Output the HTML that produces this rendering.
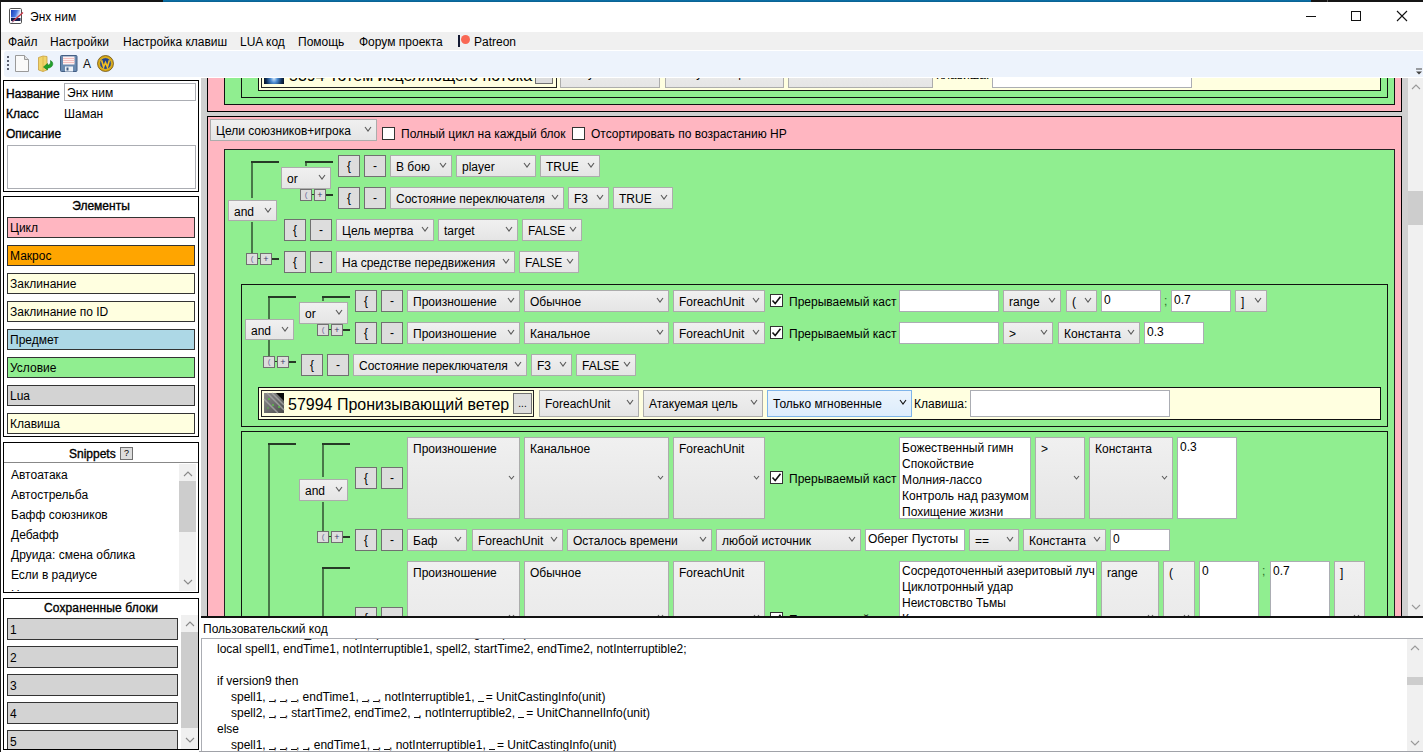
<!DOCTYPE html><html><head><meta charset="utf-8"><style>
html,body{margin:0;padding:0;width:1423px;height:752px;overflow:hidden;background:#fff}
body{position:relative;font-family:"Liberation Sans",sans-serif}
.a{position:absolute;box-sizing:border-box}
.t{position:absolute;white-space:nowrap;font-family:"Liberation Sans",sans-serif;color:#000}
svg.a{overflow:visible}
</style></head><body>
<div class="a" style="left:0px;top:0px;width:1423px;height:752px;background:#fff;"></div>
<div class="a" style="left:0px;top:0px;width:163px;height:2px;background:#151515;"></div>
<div class="a" style="left:163px;top:0px;width:1148px;height:2px;background:linear-gradient(#0b72ab,#0a5f8e);"></div>
<div class="a" style="left:1311px;top:0px;width:112px;height:2px;background:#151515;"></div>
<div class="a" style="left:1327px;top:0px;width:1px;height:2px;background:#555;"></div>
<div class="a" style="left:0px;top:0px;width:1px;height:752px;background:#1b1b1b;"></div>
<svg class="a" style="left:9px;top:8px" width="15" height="16"><defs><linearGradient id="tg" x1="0" y1="0" x2="1" y2="0.3"><stop offset="0" stop-color="#1438b8"/><stop offset="0.6" stop-color="#4a78e0"/><stop offset="1" stop-color="#e8f0ff"/></linearGradient></defs><rect x="0.5" y="0.5" width="12" height="15" rx="1.2" fill="#fff" stroke="#505050"/><rect x="2" y="2" width="9.5" height="7.5" fill="url(#tg)"/><rect x="2" y="10" width="9.5" height="3" fill="#101e50"/><path d="M3.2 14 L14 4.5" stroke="#c83848" stroke-width="1.4"/><path d="M3 14.5 L5 12.5" stroke="#9ab0e0" stroke-width="1"/></svg>
<div class="t" style="left:30px;top:9.84px;font-size:12px;line-height:14px;font-weight:400;color:#000;">Энх ним</div>
<div class="a" style="left:1306px;top:16px;width:10px;height:1px;background:#111;"></div>
<div class="a" style="left:1351px;top:11px;width:10px;height:10px;border:1px solid #111;"></div>
<svg class="a" style="left:1396px;top:10px" width="12" height="12"><path d="M1 1 L11 11 M11 1 L1 11" stroke="#111" stroke-width="1.1"/></svg>
<div class="a" style="left:1px;top:32px;width:1422px;height:18px;background:#F0F0F0;"></div>
<div class="t" style="left:8px;top:34.84px;font-size:12px;line-height:14px;font-weight:400;color:#000;">Файл</div>
<div class="t" style="left:50px;top:34.84px;font-size:12px;line-height:14px;font-weight:400;color:#000;">Настройки</div>
<div class="t" style="left:123px;top:34.84px;font-size:12px;line-height:14px;font-weight:400;color:#000;">Настройка клавиш</div>
<div class="t" style="left:240px;top:34.84px;font-size:12px;line-height:14px;font-weight:400;color:#000;">LUA код</div>
<div class="t" style="left:298px;top:34.84px;font-size:12px;line-height:14px;font-weight:400;color:#000;">Помощь</div>
<div class="t" style="left:359px;top:34.84px;font-size:12px;line-height:14px;font-weight:400;color:#000;">Форум проекта</div>
<div class="t" style="left:474px;top:34.84px;font-size:12px;line-height:14px;font-weight:400;color:#000;">Patreon</div>
<div class="a" style="left:458px;top:35px;width:2px;height:12px;background:#141a33;"></div>
<div class="a" style="left:461px;top:35px;width:9px;height:9px;border-radius:50%;background:#f96854"></div>
<div class="a" style="left:4px;top:51px;width:1419px;height:26px;background:#EDF3FC;border-radius:3px 0 0 3px;"></div>
<div class="a" style="left:7px;top:56px;width:2px;height:2px;background:#5a6070;"></div>
<div class="a" style="left:7px;top:60px;width:2px;height:2px;background:#5a6070;"></div>
<div class="a" style="left:7px;top:64px;width:2px;height:2px;background:#5a6070;"></div>
<div class="a" style="left:7px;top:68px;width:2px;height:2px;background:#5a6070;"></div>
<svg class="a" style="left:15px;top:55px" width="15" height="17"><path d="M0.5 0.5 H9.5 L13.5 4.5 V16.5 H0.5 Z" fill="#fafafa" stroke="#9a9a9a"/><path d="M9.5 0.5 V4.5 H13.5" fill="#e0e0e0" stroke="#9a9a9a"/></svg>
<svg class="a" style="left:37px;top:55px" width="18" height="17"><path d="M1.5 2.5 L6 1 L10 1.5 V15 L6 16.5 L1.5 15 Z" fill="#f0d46a" stroke="#c8a040" stroke-width="0.8"/><path d="M6 1.2 V16.3" stroke="#d8b248" stroke-width="0.8"/><path d="M6.5 12 L10.5 8.5 L10.5 10.2 C13 10 14 8 13.5 5.5 C16.5 7 17 11.5 12 13 L10.5 13 L10.5 15 Z" fill="#22a22a" stroke="#0e7a16" stroke-width="0.6"/></svg>
<svg class="a" style="left:60px;top:55px" width="18" height="17"><rect x="0.5" y="0.5" width="16.5" height="16" rx="1" fill="#6a8ab0" stroke="#445f85"/><rect x="3" y="1.5" width="11.5" height="8" fill="#fff0f0"/><path d="M3 3.5 H14.5 M3 5.5 H14.5 M3 7.5 H14.5" stroke="#f0b4b4" stroke-width="0.8"/><rect x="5" y="11.5" width="8" height="5" fill="#eef2f8"/><rect x="6.5" y="12.5" width="2" height="3" fill="#445f85"/></svg>
<div class="t" style="left:83px;top:56.84px;font-size:12px;line-height:14px;font-weight:400;color:#111;">A</div>
<svg class="a" style="left:97px;top:55px" width="17" height="17"><circle cx="8.5" cy="8.5" r="8" fill="#d8a818" stroke="#5a4008" stroke-width="0.7"/><circle cx="8.5" cy="8.5" r="5.8" fill="#24448c" stroke="#f0c830" stroke-width="0.6"/><path d="M4.6 5.2 L6.6 12 L8.5 7.5 L10.4 12 L12.4 5.2" fill="none" stroke="#f4c020" stroke-width="1.6"/></svg>
<svg class="a" style="left:1415px;top:68px" width="8" height="8"><path d="M1 1 H7" stroke="#444"/><path d="M1 3.5 H7 L4 6.5 Z" fill="#444"/></svg>
<div class="a" style="left:3px;top:80px;width:196px;height:112px;border:1px solid #000;"></div>
<div class="t" style="left:6px;top:86.84px;font-size:12px;line-height:14px;font-weight:400;color:#000;-webkit-text-stroke:0.35px #000;">Название</div>
<div class="a" style="left:64px;top:83px;width:132px;height:18px;background:#fff;border:1px solid #ABADB3;"></div>
<div class="t" style="left:67px;top:85.84px;font-size:12px;line-height:14px;font-weight:400;color:#000;">Энх ним</div>
<div class="t" style="left:6px;top:106.84px;font-size:12px;line-height:14px;font-weight:400;color:#000;-webkit-text-stroke:0.35px #000;">Класс</div>
<div class="t" style="left:64px;top:106.84px;font-size:12px;line-height:14px;font-weight:400;color:#000;">Шаман</div>
<div class="t" style="left:6px;top:126.84px;font-size:12px;line-height:14px;font-weight:400;color:#000;-webkit-text-stroke:0.35px #000;">Описание</div>
<div class="a" style="left:7px;top:145px;width:189px;height:44px;background:#fff;border:1px solid #ABADB3;"></div>
<div class="a" style="left:3px;top:196px;width:196px;height:241px;border:1px solid #000;"></div>
<div class="t" style="left:3px;top:198px;width:196px;text-align:center;font-size:12px;line-height:16px;-webkit-text-stroke:0.35px #000">Элементы</div>
<div class="a" style="left:7px;top:217px;width:188px;height:21px;background:#FFB6C1;border:1px solid #333;"></div>
<div class="t" style="left:10px;top:220.84px;font-size:12px;line-height:14px;font-weight:400;color:#000;">Цикл</div>
<div class="a" style="left:7px;top:245px;width:188px;height:21px;background:#FFA500;border:1px solid #333;"></div>
<div class="t" style="left:10px;top:248.84px;font-size:12px;line-height:14px;font-weight:400;color:#000;">Макрос</div>
<div class="a" style="left:7px;top:273px;width:188px;height:21px;background:#FFFFE0;border:1px solid #333;"></div>
<div class="t" style="left:10px;top:276.84px;font-size:12px;line-height:14px;font-weight:400;color:#000;">Заклинание</div>
<div class="a" style="left:7px;top:301px;width:188px;height:21px;background:#FFFFE0;border:1px solid #333;"></div>
<div class="t" style="left:10px;top:304.84px;font-size:12px;line-height:14px;font-weight:400;color:#000;">Заклинание по ID</div>
<div class="a" style="left:7px;top:329px;width:188px;height:21px;background:#ADD8E6;border:1px solid #333;"></div>
<div class="t" style="left:10px;top:332.84px;font-size:12px;line-height:14px;font-weight:400;color:#000;">Предмет</div>
<div class="a" style="left:7px;top:357px;width:188px;height:21px;background:#90EE90;border:1px solid #333;"></div>
<div class="t" style="left:10px;top:360.84px;font-size:12px;line-height:14px;font-weight:400;color:#000;">Условие</div>
<div class="a" style="left:7px;top:385px;width:188px;height:21px;background:#D3D3D3;border:1px solid #333;"></div>
<div class="t" style="left:10px;top:388.84px;font-size:12px;line-height:14px;font-weight:400;color:#000;">Lua</div>
<div class="a" style="left:7px;top:413px;width:188px;height:21px;background:#FFFFE0;border:1px solid #333;"></div>
<div class="t" style="left:10px;top:416.84px;font-size:12px;line-height:14px;font-weight:400;color:#000;">Клавиша</div>
<div class="a" style="left:3px;top:442px;width:196px;height:151px;border:1px solid #000;"></div>
<div class="t" style="left:69px;top:446.84px;font-size:12px;line-height:14px;font-weight:400;color:#000;-webkit-text-stroke:0.35px #000;">Snippets</div>
<div class="a" style="left:120px;top:447px;width:13px;height:13px;background:#DDDDDD;border:1px solid #707070;"></div>
<div class="t" style="left:120px;top:447px;width:13px;height:13px;line-height:13px;text-align:center;font-size:9px">?</div>
<div class="a" style="left:4px;top:462px;width:194px;height:1px;background:#888;"></div>
<div class="a" style="left:0;top:0;width:1423px;height:752px;clip-path:inset(463px 1240px 161px 4px)">
<div class="t" style="left:11px;top:467.84px;font-size:12px;line-height:14px;font-weight:400;color:#000;">Автоатака</div>
<div class="t" style="left:11px;top:487.84px;font-size:12px;line-height:14px;font-weight:400;color:#000;">Автострельба</div>
<div class="t" style="left:11px;top:507.84px;font-size:12px;line-height:14px;font-weight:400;color:#000;">Бафф союзников</div>
<div class="t" style="left:11px;top:527.84px;font-size:12px;line-height:14px;font-weight:400;color:#000;">Дебафф</div>
<div class="t" style="left:11px;top:547.84px;font-size:12px;line-height:14px;font-weight:400;color:#000;">Друида: смена облика</div>
<div class="t" style="left:11px;top:567.84px;font-size:12px;line-height:14px;font-weight:400;color:#000;">Если в радиусе</div>
<div class="t" style="left:11px;top:587.84px;font-size:12px;line-height:14px;font-weight:400;color:#000;">Накладывание</div>
</div>
<div class="a" style="left:179px;top:464px;width:17px;height:127px;background:#F0F0F0;"></div>
<div class="a" style="left:179px;top:481px;width:17px;height:51px;background:#CDCDCD;"></div>
<svg class="a" style="left:182.5px;top:471.0px" width="10" height="6"><path d="M1 5 L5.0 1 L9 5" fill="none" stroke="#888" stroke-width="1.1"/></svg>
<svg class="a" style="left:182.5px;top:579.0px" width="10" height="6"><path d="M1 1 L5.0 5 L9 1" fill="none" stroke="#888" stroke-width="1.1"/></svg>
<div class="t" style="left:3px;top:600px;width:196px;text-align:center;font-size:12px;line-height:16px;-webkit-text-stroke:0.35px #000;letter-spacing:0.13px">Сохраненные блоки</div>
<div class="a" style="left:7px;top:618px;width:171px;height:22px;background:#D3D3D3;border:1px solid #333;"></div>
<div class="t" style="left:10px;top:622.84px;font-size:12px;line-height:14px;font-weight:400;color:#000;">1</div>
<div class="a" style="left:7px;top:646px;width:171px;height:22px;background:#D3D3D3;border:1px solid #333;"></div>
<div class="t" style="left:10px;top:650.84px;font-size:12px;line-height:14px;font-weight:400;color:#000;">2</div>
<div class="a" style="left:7px;top:674px;width:171px;height:22px;background:#D3D3D3;border:1px solid #333;"></div>
<div class="t" style="left:10px;top:678.84px;font-size:12px;line-height:14px;font-weight:400;color:#000;">3</div>
<div class="a" style="left:7px;top:702px;width:171px;height:22px;background:#D3D3D3;border:1px solid #333;"></div>
<div class="t" style="left:10px;top:706.84px;font-size:12px;line-height:14px;font-weight:400;color:#000;">4</div>
<div class="a" style="left:7px;top:730px;width:171px;height:22px;background:#D3D3D3;border:1px solid #333;"></div>
<div class="t" style="left:10px;top:734.84px;font-size:12px;line-height:14px;font-weight:400;color:#000;">5</div>
<div class="a" style="left:1px;top:750px;width:198px;height:2px;background:#fff;"></div>
<div class="a" style="left:181px;top:615px;width:17px;height:134px;background:#F0F0F0;"></div>
<div class="a" style="left:181px;top:632px;width:17px;height:96px;background:#CDCDCD;"></div>
<svg class="a" style="left:184.5px;top:621.0px" width="10" height="6"><path d="M1 5 L5.0 1 L9 5" fill="none" stroke="#888" stroke-width="1.1"/></svg>
<svg class="a" style="left:184.5px;top:737.0px" width="10" height="6"><path d="M1 1 L5.0 5 L9 1" fill="none" stroke="#888" stroke-width="1.1"/></svg>
<div class="a" style="left:3px;top:598px;width:196px;height:152px;border:1px solid #000;"></div>
<div class="a" style="left:201px;top:78px;width:1207px;height:538px;background:#D0D0D0;"></div>
<div class="a" style="left:1px;top:77px;width:1422px;height:1px;background:#fff;"></div>
<div class="a" style="left:0;top:0;width:1423px;height:752px;clip-path:inset(78px 15px 136px 201px)">
<div class="a" style="left:207px;top:40px;width:1195px;height:72px;background:#FFB6C1;border:1px solid #000;"></div>
<div class="a" style="left:224px;top:40px;width:1171px;height:65px;background:#90EE90;border:1px solid #111;"></div>
<div class="a" style="left:241px;top:40px;width:1147px;height:58px;background:#90EE90;border:1px solid #111;"></div>
<div class="a" style="left:258px;top:58px;width:1123px;height:33px;background:#FFFFE0;border:1px solid #111;"></div>
<div class="a" style="left:261px;top:61px;width:296px;height:27px;border:1px solid #222;"></div>
<div class="a" style="left:264px;top:64px;width:20px;height:20px;background:radial-gradient(ellipse at 50% 70%,#d8ecff 0,#4a8ad0 25%,#10305a 55%,#050a18 80%)"></div>
<div class="t" style="left:289px;top:65.96px;font-size:16px;line-height:19px;font-weight:400;color:#000;">5394 Тотем исцеляющего потока</div>
<div class="a" style="left:535px;top:63px;width:18px;height:21px;background:#DDDDDD;border:1px solid #707070;"></div>
<div class="t" style="left:535px;top:63px;width:18px;height:21px;line-height:21px;text-align:center;font-size:10px">...</div>
<div class="a" style="left:560px;top:61px;width:100px;height:27px;background:linear-gradient(#F0F0F0,#E5E5E5);border:1px solid #ACACAC;"></div>
<svg class="a" style="left:646.5px;top:69.5px" width="8" height="6"><path d="M1 1 L4.0 5 L7 1" fill="none" stroke="#5a5a5a" stroke-width="1.1"/></svg>
<div class="a" style="left:665px;top:61px;width:119px;height:27px;background:linear-gradient(#F0F0F0,#E5E5E5);border:1px solid #ACACAC;"></div>
<svg class="a" style="left:770.5px;top:69.5px" width="8" height="6"><path d="M1 1 L4.0 5 L7 1" fill="none" stroke="#5a5a5a" stroke-width="1.1"/></svg>
<div class="a" style="left:788px;top:61px;width:145px;height:27px;background:linear-gradient(#F0F0F0,#E5E5E5);border:1px solid #ACACAC;"></div>
<svg class="a" style="left:919.5px;top:69.5px" width="8" height="6"><path d="M1 1 L4.0 5 L7 1" fill="none" stroke="#5a5a5a" stroke-width="1.1"/></svg>
<div class="t" style="left:566px;top:65.84px;font-size:12px;line-height:14px;font-weight:400;color:#000;">Party</div>
<div class="t" style="left:671px;top:65.84px;font-size:12px;line-height:14px;font-weight:400;color:#000;">Атакуемая цель</div>
<div class="t" style="left:794px;top:65.84px;font-size:12px;line-height:14px;font-weight:400;color:#000;">Только мгновенные</div>
<div class="t" style="left:936px;top:67.84px;font-size:12px;line-height:14px;font-weight:400;color:#000;">Клавиша:</div>
<div class="a" style="left:992px;top:61px;width:200px;height:27px;background:#fff;border:1px solid #ABADB3;"></div>
<div class="a" style="left:207px;top:116px;width:1195px;height:700px;background:#FFB6C1;border:1px solid #000;"></div>
<div class="a" style="left:210px;top:119px;width:167px;height:22px;background:linear-gradient(#F0F0F0,#E5E5E5);border:1px solid #ACACAC;"></div>
<div class="t" style="left:216px;top:123.84px;font-size:12px;line-height:14px;font-weight:400;color:#000;">Цели союзников+игрока</div>
<svg class="a" style="left:363.5px;top:125.5px" width="8" height="6"><path d="M1 1 L4.0 5 L7 1" fill="none" stroke="#5a5a5a" stroke-width="1.1"/></svg>
<div class="a" style="left:382px;top:127px;width:13px;height:13px;background:#fff;border:1px solid #333;"></div>
<div class="t" style="left:401px;top:126.84px;font-size:12px;line-height:14px;font-weight:400;color:#000;">Полный цикл на каждый блок</div>
<div class="a" style="left:572px;top:127px;width:13px;height:13px;background:#fff;border:1px solid #333;"></div>
<div class="t" style="left:591px;top:126.84px;font-size:12px;line-height:14px;font-weight:400;color:#000;">Отсортировать по возрастанию HP</div>
<div class="a" style="left:224px;top:149px;width:1171px;height:600px;background:#90EE90;border:1px solid #222;"></div>
<div class="a" style="left:251px;top:161px;width:2px;height:37px;background:#487748;"></div>
<div class="a" style="left:251px;top:161px;width:28px;height:2px;background:#263a26;"></div>
<div class="a" style="left:251px;top:222px;width:2px;height:33px;background:#487748;"></div>
<div class="a" style="left:228px;top:200px;width:49px;height:21px;background:linear-gradient(#F0F0F0,#E5E5E5);border:1px solid #ACACAC;"></div>
<div class="t" style="left:234px;top:204.84px;font-size:12px;line-height:14px;font-weight:400;color:#000;">and</div>
<svg class="a" style="left:263.5px;top:206.5px" width="8" height="6"><path d="M1 1 L4.0 5 L7 1" fill="none" stroke="#5a5a5a" stroke-width="1.1"/></svg>
<div class="a" style="left:246px;top:253px;width:12px;height:12px;background:#DDDDDD;border:1px solid #707070;"></div>
<div class="a" style="left:260px;top:253px;width:12px;height:12px;background:#DDDDDD;border:1px solid #707070;"></div>
<div class="t" style="left:246px;top:253px;width:12px;height:12px;line-height:11px;text-align:center;font-size:8px;color:#6a6a9a">(</div>
<div class="t" style="left:260px;top:253px;width:12px;height:12px;line-height:12px;text-align:center;font-size:9px;color:#3a3a6a">+</div>
<div class="a" style="left:258px;top:258px;width:2px;height:1px;background:#2c3e2c;"></div>
<div class="a" style="left:272px;top:258px;width:7px;height:2px;background:#263a26;"></div>
<div class="a" style="left:281px;top:167px;width:50px;height:22px;background:linear-gradient(#F0F0F0,#E5E5E5);border:1px solid #ACACAC;"></div>
<div class="t" style="left:287px;top:171.84px;font-size:12px;line-height:14px;font-weight:400;color:#000;">or</div>
<svg class="a" style="left:317.5px;top:173.5px" width="8" height="6"><path d="M1 1 L4.0 5 L7 1" fill="none" stroke="#5a5a5a" stroke-width="1.1"/></svg>
<div class="a" style="left:305px;top:161px;width:2px;height:5px;background:#487748;"></div>
<div class="a" style="left:305px;top:161px;width:28px;height:2px;background:#263a26;"></div>
<div class="a" style="left:300px;top:189px;width:12px;height:12px;background:#DDDDDD;border:1px solid #707070;"></div>
<div class="a" style="left:314px;top:189px;width:12px;height:12px;background:#DDDDDD;border:1px solid #707070;"></div>
<div class="t" style="left:300px;top:189px;width:12px;height:12px;line-height:11px;text-align:center;font-size:8px;color:#6a6a9a">(</div>
<div class="t" style="left:314px;top:189px;width:12px;height:12px;line-height:12px;text-align:center;font-size:9px;color:#3a3a6a">+</div>
<div class="a" style="left:312px;top:194px;width:2px;height:1px;background:#2c3e2c;"></div>
<div class="a" style="left:326px;top:194px;width:7px;height:2px;background:#263a26;"></div>
<div class="a" style="left:338px;top:155px;width:22px;height:22px;background:#DDDDDD;border:1px solid #707070;"></div>
<div class="t" style="left:338px;top:155px;width:22px;height:22px;line-height:22px;text-align:center;font-size:12px">{</div>
<div class="a" style="left:364px;top:155px;width:22px;height:22px;background:#DDDDDD;border:1px solid #707070;"></div>
<div class="t" style="left:364px;top:155px;width:22px;height:22px;line-height:22px;text-align:center;font-size:12px">-</div>
<div class="a" style="left:390px;top:155px;width:62px;height:22px;background:linear-gradient(#F0F0F0,#E5E5E5);border:1px solid #ACACAC;"></div>
<div class="t" style="left:396px;top:159.84px;font-size:12px;line-height:14px;font-weight:400;color:#000;">В бою</div>
<svg class="a" style="left:438.5px;top:161.5px" width="8" height="6"><path d="M1 1 L4.0 5 L7 1" fill="none" stroke="#5a5a5a" stroke-width="1.1"/></svg>
<div class="a" style="left:456px;top:155px;width:80px;height:22px;background:linear-gradient(#F0F0F0,#E5E5E5);border:1px solid #ACACAC;"></div>
<div class="t" style="left:462px;top:159.84px;font-size:12px;line-height:14px;font-weight:400;color:#000;">player</div>
<svg class="a" style="left:522.5px;top:161.5px" width="8" height="6"><path d="M1 1 L4.0 5 L7 1" fill="none" stroke="#5a5a5a" stroke-width="1.1"/></svg>
<div class="a" style="left:540px;top:155px;width:60px;height:22px;background:linear-gradient(#F0F0F0,#E5E5E5);border:1px solid #ACACAC;"></div>
<div class="t" style="left:546px;top:159.84px;font-size:12px;line-height:14px;font-weight:400;color:#000;">TRUE</div>
<svg class="a" style="left:586.5px;top:161.5px" width="8" height="6"><path d="M1 1 L4.0 5 L7 1" fill="none" stroke="#5a5a5a" stroke-width="1.1"/></svg>
<div class="a" style="left:338px;top:187px;width:22px;height:22px;background:#DDDDDD;border:1px solid #707070;"></div>
<div class="t" style="left:338px;top:187px;width:22px;height:22px;line-height:22px;text-align:center;font-size:12px">{</div>
<div class="a" style="left:364px;top:187px;width:22px;height:22px;background:#DDDDDD;border:1px solid #707070;"></div>
<div class="t" style="left:364px;top:187px;width:22px;height:22px;line-height:22px;text-align:center;font-size:12px">-</div>
<div class="a" style="left:390px;top:187px;width:174px;height:22px;background:linear-gradient(#F0F0F0,#E5E5E5);border:1px solid #ACACAC;"></div>
<div class="t" style="left:396px;top:191.84px;font-size:12px;line-height:14px;font-weight:400;color:#000;">Состояние переключателя</div>
<svg class="a" style="left:550.5px;top:193.5px" width="8" height="6"><path d="M1 1 L4.0 5 L7 1" fill="none" stroke="#5a5a5a" stroke-width="1.1"/></svg>
<div class="a" style="left:568px;top:187px;width:41px;height:22px;background:linear-gradient(#F0F0F0,#E5E5E5);border:1px solid #ACACAC;"></div>
<div class="t" style="left:574px;top:191.84px;font-size:12px;line-height:14px;font-weight:400;color:#000;">F3</div>
<svg class="a" style="left:595.5px;top:193.5px" width="8" height="6"><path d="M1 1 L4.0 5 L7 1" fill="none" stroke="#5a5a5a" stroke-width="1.1"/></svg>
<div class="a" style="left:613px;top:187px;width:60px;height:22px;background:linear-gradient(#F0F0F0,#E5E5E5);border:1px solid #ACACAC;"></div>
<div class="t" style="left:619px;top:191.84px;font-size:12px;line-height:14px;font-weight:400;color:#000;">TRUE</div>
<svg class="a" style="left:659.5px;top:193.5px" width="8" height="6"><path d="M1 1 L4.0 5 L7 1" fill="none" stroke="#5a5a5a" stroke-width="1.1"/></svg>
<div class="a" style="left:284px;top:219px;width:22px;height:22px;background:#DDDDDD;border:1px solid #707070;"></div>
<div class="t" style="left:284px;top:219px;width:22px;height:22px;line-height:22px;text-align:center;font-size:12px">{</div>
<div class="a" style="left:310px;top:219px;width:22px;height:22px;background:#DDDDDD;border:1px solid #707070;"></div>
<div class="t" style="left:310px;top:219px;width:22px;height:22px;line-height:22px;text-align:center;font-size:12px">-</div>
<div class="a" style="left:336px;top:219px;width:98px;height:22px;background:linear-gradient(#F0F0F0,#E5E5E5);border:1px solid #ACACAC;"></div>
<div class="t" style="left:342px;top:223.84px;font-size:12px;line-height:14px;font-weight:400;color:#000;">Цель мертва</div>
<svg class="a" style="left:420.5px;top:225.5px" width="8" height="6"><path d="M1 1 L4.0 5 L7 1" fill="none" stroke="#5a5a5a" stroke-width="1.1"/></svg>
<div class="a" style="left:438px;top:219px;width:80px;height:22px;background:linear-gradient(#F0F0F0,#E5E5E5);border:1px solid #ACACAC;"></div>
<div class="t" style="left:444px;top:223.84px;font-size:12px;line-height:14px;font-weight:400;color:#000;">target</div>
<svg class="a" style="left:504.5px;top:225.5px" width="8" height="6"><path d="M1 1 L4.0 5 L7 1" fill="none" stroke="#5a5a5a" stroke-width="1.1"/></svg>
<div class="a" style="left:522px;top:219px;width:60px;height:22px;background:linear-gradient(#F0F0F0,#E5E5E5);border:1px solid #ACACAC;"></div>
<div class="t" style="left:528px;top:223.84px;font-size:12px;line-height:14px;font-weight:400;color:#000;">FALSE</div>
<svg class="a" style="left:568.5px;top:225.5px" width="8" height="6"><path d="M1 1 L4.0 5 L7 1" fill="none" stroke="#5a5a5a" stroke-width="1.1"/></svg>
<div class="a" style="left:284px;top:251px;width:22px;height:22px;background:#DDDDDD;border:1px solid #707070;"></div>
<div class="t" style="left:284px;top:251px;width:22px;height:22px;line-height:22px;text-align:center;font-size:12px">{</div>
<div class="a" style="left:310px;top:251px;width:22px;height:22px;background:#DDDDDD;border:1px solid #707070;"></div>
<div class="t" style="left:310px;top:251px;width:22px;height:22px;line-height:22px;text-align:center;font-size:12px">-</div>
<div class="a" style="left:336px;top:251px;width:179px;height:22px;background:linear-gradient(#F0F0F0,#E5E5E5);border:1px solid #ACACAC;"></div>
<div class="t" style="left:342px;top:255.84px;font-size:12px;line-height:14px;font-weight:400;color:#000;">На средстве передвижения</div>
<svg class="a" style="left:501.5px;top:257.5px" width="8" height="6"><path d="M1 1 L4.0 5 L7 1" fill="none" stroke="#5a5a5a" stroke-width="1.1"/></svg>
<div class="a" style="left:519px;top:251px;width:60px;height:22px;background:linear-gradient(#F0F0F0,#E5E5E5);border:1px solid #ACACAC;"></div>
<div class="t" style="left:525px;top:255.84px;font-size:12px;line-height:14px;font-weight:400;color:#000;">FALSE</div>
<svg class="a" style="left:565.5px;top:257.5px" width="8" height="6"><path d="M1 1 L4.0 5 L7 1" fill="none" stroke="#5a5a5a" stroke-width="1.1"/></svg>
<div class="a" style="left:241px;top:284px;width:1147px;height:143px;background:#90EE90;border:1px solid #111;"></div>
<div class="a" style="left:268px;top:296px;width:2px;height:23px;background:#487748;"></div>
<div class="a" style="left:268px;top:296px;width:28px;height:2px;background:#263a26;"></div>
<div class="a" style="left:268px;top:340px;width:2px;height:18px;background:#487748;"></div>
<div class="a" style="left:245px;top:319px;width:49px;height:21px;background:linear-gradient(#F0F0F0,#E5E5E5);border:1px solid #ACACAC;"></div>
<div class="t" style="left:251px;top:323.84px;font-size:12px;line-height:14px;font-weight:400;color:#000;">and</div>
<svg class="a" style="left:280.5px;top:325.5px" width="8" height="6"><path d="M1 1 L4.0 5 L7 1" fill="none" stroke="#5a5a5a" stroke-width="1.1"/></svg>
<div class="a" style="left:263px;top:356px;width:12px;height:12px;background:#DDDDDD;border:1px solid #707070;"></div>
<div class="a" style="left:277px;top:356px;width:12px;height:12px;background:#DDDDDD;border:1px solid #707070;"></div>
<div class="t" style="left:263px;top:356px;width:12px;height:12px;line-height:11px;text-align:center;font-size:8px;color:#6a6a9a">(</div>
<div class="t" style="left:277px;top:356px;width:12px;height:12px;line-height:12px;text-align:center;font-size:9px;color:#3a3a6a">+</div>
<div class="a" style="left:275px;top:361px;width:2px;height:1px;background:#2c3e2c;"></div>
<div class="a" style="left:289px;top:361px;width:7px;height:2px;background:#263a26;"></div>
<div class="a" style="left:299px;top:302px;width:49px;height:22px;background:linear-gradient(#F0F0F0,#E5E5E5);border:1px solid #ACACAC;"></div>
<div class="t" style="left:305px;top:306.84px;font-size:12px;line-height:14px;font-weight:400;color:#000;">or</div>
<svg class="a" style="left:334.5px;top:308.5px" width="8" height="6"><path d="M1 1 L4.0 5 L7 1" fill="none" stroke="#5a5a5a" stroke-width="1.1"/></svg>
<div class="a" style="left:322px;top:296px;width:2px;height:5px;background:#487748;"></div>
<div class="a" style="left:322px;top:296px;width:28px;height:2px;background:#263a26;"></div>
<div class="a" style="left:317px;top:324px;width:12px;height:12px;background:#DDDDDD;border:1px solid #707070;"></div>
<div class="a" style="left:331px;top:324px;width:12px;height:12px;background:#DDDDDD;border:1px solid #707070;"></div>
<div class="t" style="left:317px;top:324px;width:12px;height:12px;line-height:11px;text-align:center;font-size:8px;color:#6a6a9a">(</div>
<div class="t" style="left:331px;top:324px;width:12px;height:12px;line-height:12px;text-align:center;font-size:9px;color:#3a3a6a">+</div>
<div class="a" style="left:329px;top:329px;width:2px;height:1px;background:#2c3e2c;"></div>
<div class="a" style="left:343px;top:329px;width:7px;height:2px;background:#263a26;"></div>
<div class="a" style="left:355px;top:290px;width:22px;height:22px;background:#DDDDDD;border:1px solid #707070;"></div>
<div class="t" style="left:355px;top:290px;width:22px;height:22px;line-height:22px;text-align:center;font-size:12px">{</div>
<div class="a" style="left:381px;top:290px;width:22px;height:22px;background:#DDDDDD;border:1px solid #707070;"></div>
<div class="t" style="left:381px;top:290px;width:22px;height:22px;line-height:22px;text-align:center;font-size:12px">-</div>
<div class="a" style="left:407px;top:290px;width:113px;height:22px;background:linear-gradient(#F0F0F0,#E5E5E5);border:1px solid #ACACAC;"></div>
<div class="t" style="left:413px;top:294.84px;font-size:12px;line-height:14px;font-weight:400;color:#000;">Произношение</div>
<svg class="a" style="left:506.5px;top:296.5px" width="8" height="6"><path d="M1 1 L4.0 5 L7 1" fill="none" stroke="#5a5a5a" stroke-width="1.1"/></svg>
<div class="a" style="left:524px;top:290px;width:145px;height:22px;background:linear-gradient(#F0F0F0,#E5E5E5);border:1px solid #ACACAC;"></div>
<div class="t" style="left:530px;top:294.84px;font-size:12px;line-height:14px;font-weight:400;color:#000;">Обычное</div>
<svg class="a" style="left:655.5px;top:296.5px" width="8" height="6"><path d="M1 1 L4.0 5 L7 1" fill="none" stroke="#5a5a5a" stroke-width="1.1"/></svg>
<div class="a" style="left:673px;top:290px;width:92px;height:22px;background:linear-gradient(#F0F0F0,#E5E5E5);border:1px solid #ACACAC;"></div>
<div class="t" style="left:679px;top:294.84px;font-size:12px;line-height:14px;font-weight:400;color:#000;">ForeachUnit</div>
<svg class="a" style="left:751.5px;top:296.5px" width="8" height="6"><path d="M1 1 L4.0 5 L7 1" fill="none" stroke="#5a5a5a" stroke-width="1.1"/></svg>
<div class="a" style="left:770px;top:294px;width:13px;height:13px;background:#fff;border:1px solid #333;"></div>
<svg class="a" style="left:770px;top:294px" width="13" height="13"><path d="M2.5 6.5 L5.2 9.5 L10.5 2.8" fill="none" stroke="#111" stroke-width="1.6"/></svg>
<div class="t" style="left:789px;top:294.84px;font-size:12px;line-height:14px;font-weight:400;color:#000;">Прерываемый каст</div>
<div class="a" style="left:899px;top:290px;width:100px;height:22px;background:#fff;border:1px solid #ABADB3;"></div>
<div class="a" style="left:1003px;top:290px;width:58px;height:22px;background:linear-gradient(#F0F0F0,#E5E5E5);border:1px solid #ACACAC;"></div>
<div class="t" style="left:1009px;top:294.84px;font-size:12px;line-height:14px;font-weight:400;color:#000;">range</div>
<svg class="a" style="left:1047.5px;top:296.5px" width="8" height="6"><path d="M1 1 L4.0 5 L7 1" fill="none" stroke="#5a5a5a" stroke-width="1.1"/></svg>
<div class="a" style="left:1066px;top:290px;width:31px;height:22px;background:linear-gradient(#F0F0F0,#E5E5E5);border:1px solid #ACACAC;"></div>
<div class="t" style="left:1072px;top:294.84px;font-size:12px;line-height:14px;font-weight:400;color:#000;">(</div>
<svg class="a" style="left:1083.5px;top:296.5px" width="8" height="6"><path d="M1 1 L4.0 5 L7 1" fill="none" stroke="#5a5a5a" stroke-width="1.1"/></svg>
<div class="a" style="left:1101px;top:290px;width:60px;height:22px;background:#fff;border:1px solid #ABADB3;"></div>
<div class="t" style="left:1104px;top:292.84px;font-size:12px;line-height:14px;font-weight:400;color:#000;">0</div>
<div class="t" style="left:1164px;top:293.84px;font-size:12px;line-height:14px;font-weight:400;color:#2a6a2a;">;</div>
<div class="a" style="left:1171px;top:290px;width:60px;height:22px;background:#fff;border:1px solid #ABADB3;"></div>
<div class="t" style="left:1174px;top:292.84px;font-size:12px;line-height:14px;font-weight:400;color:#000;">0.7</div>
<div class="a" style="left:1235px;top:290px;width:32px;height:22px;background:linear-gradient(#F0F0F0,#E5E5E5);border:1px solid #ACACAC;"></div>
<div class="t" style="left:1241px;top:294.84px;font-size:12px;line-height:14px;font-weight:400;color:#000;">]</div>
<svg class="a" style="left:1253.5px;top:296.5px" width="8" height="6"><path d="M1 1 L4.0 5 L7 1" fill="none" stroke="#5a5a5a" stroke-width="1.1"/></svg>
<div class="a" style="left:355px;top:322px;width:22px;height:22px;background:#DDDDDD;border:1px solid #707070;"></div>
<div class="t" style="left:355px;top:322px;width:22px;height:22px;line-height:22px;text-align:center;font-size:12px">{</div>
<div class="a" style="left:381px;top:322px;width:22px;height:22px;background:#DDDDDD;border:1px solid #707070;"></div>
<div class="t" style="left:381px;top:322px;width:22px;height:22px;line-height:22px;text-align:center;font-size:12px">-</div>
<div class="a" style="left:407px;top:322px;width:113px;height:22px;background:linear-gradient(#F0F0F0,#E5E5E5);border:1px solid #ACACAC;"></div>
<div class="t" style="left:413px;top:326.84px;font-size:12px;line-height:14px;font-weight:400;color:#000;">Произношение</div>
<svg class="a" style="left:506.5px;top:328.5px" width="8" height="6"><path d="M1 1 L4.0 5 L7 1" fill="none" stroke="#5a5a5a" stroke-width="1.1"/></svg>
<div class="a" style="left:524px;top:322px;width:145px;height:22px;background:linear-gradient(#F0F0F0,#E5E5E5);border:1px solid #ACACAC;"></div>
<div class="t" style="left:530px;top:326.84px;font-size:12px;line-height:14px;font-weight:400;color:#000;">Канальное</div>
<svg class="a" style="left:655.5px;top:328.5px" width="8" height="6"><path d="M1 1 L4.0 5 L7 1" fill="none" stroke="#5a5a5a" stroke-width="1.1"/></svg>
<div class="a" style="left:673px;top:322px;width:92px;height:22px;background:linear-gradient(#F0F0F0,#E5E5E5);border:1px solid #ACACAC;"></div>
<div class="t" style="left:679px;top:326.84px;font-size:12px;line-height:14px;font-weight:400;color:#000;">ForeachUnit</div>
<svg class="a" style="left:751.5px;top:328.5px" width="8" height="6"><path d="M1 1 L4.0 5 L7 1" fill="none" stroke="#5a5a5a" stroke-width="1.1"/></svg>
<div class="a" style="left:770px;top:326px;width:13px;height:13px;background:#fff;border:1px solid #333;"></div>
<svg class="a" style="left:770px;top:326px" width="13" height="13"><path d="M2.5 6.5 L5.2 9.5 L10.5 2.8" fill="none" stroke="#111" stroke-width="1.6"/></svg>
<div class="t" style="left:789px;top:326.84px;font-size:12px;line-height:14px;font-weight:400;color:#000;">Прерываемый каст</div>
<div class="a" style="left:899px;top:322px;width:100px;height:22px;background:#fff;border:1px solid #ABADB3;"></div>
<div class="a" style="left:1003px;top:322px;width:50px;height:22px;background:linear-gradient(#F0F0F0,#E5E5E5);border:1px solid #ACACAC;"></div>
<div class="t" style="left:1009px;top:326.84px;font-size:12px;line-height:14px;font-weight:400;color:#000;">&gt;</div>
<svg class="a" style="left:1039.5px;top:328.5px" width="8" height="6"><path d="M1 1 L4.0 5 L7 1" fill="none" stroke="#5a5a5a" stroke-width="1.1"/></svg>
<div class="a" style="left:1058px;top:322px;width:82px;height:22px;background:linear-gradient(#F0F0F0,#E5E5E5);border:1px solid #ACACAC;"></div>
<div class="t" style="left:1064px;top:326.84px;font-size:12px;line-height:14px;font-weight:400;color:#000;">Константа</div>
<svg class="a" style="left:1126.5px;top:328.5px" width="8" height="6"><path d="M1 1 L4.0 5 L7 1" fill="none" stroke="#5a5a5a" stroke-width="1.1"/></svg>
<div class="a" style="left:1144px;top:322px;width:60px;height:22px;background:#fff;border:1px solid #ABADB3;"></div>
<div class="t" style="left:1147px;top:324.84px;font-size:12px;line-height:14px;font-weight:400;color:#000;">0.3</div>
<div class="a" style="left:301px;top:354px;width:22px;height:22px;background:#DDDDDD;border:1px solid #707070;"></div>
<div class="t" style="left:301px;top:354px;width:22px;height:22px;line-height:22px;text-align:center;font-size:12px">{</div>
<div class="a" style="left:327px;top:354px;width:22px;height:22px;background:#DDDDDD;border:1px solid #707070;"></div>
<div class="t" style="left:327px;top:354px;width:22px;height:22px;line-height:22px;text-align:center;font-size:12px">-</div>
<div class="a" style="left:353px;top:354px;width:174px;height:22px;background:linear-gradient(#F0F0F0,#E5E5E5);border:1px solid #ACACAC;"></div>
<div class="t" style="left:359px;top:358.84px;font-size:12px;line-height:14px;font-weight:400;color:#000;">Состояние переключателя</div>
<svg class="a" style="left:513.5px;top:360.5px" width="8" height="6"><path d="M1 1 L4.0 5 L7 1" fill="none" stroke="#5a5a5a" stroke-width="1.1"/></svg>
<div class="a" style="left:531px;top:354px;width:41px;height:22px;background:linear-gradient(#F0F0F0,#E5E5E5);border:1px solid #ACACAC;"></div>
<div class="t" style="left:537px;top:358.84px;font-size:12px;line-height:14px;font-weight:400;color:#000;">F3</div>
<svg class="a" style="left:558.5px;top:360.5px" width="8" height="6"><path d="M1 1 L4.0 5 L7 1" fill="none" stroke="#5a5a5a" stroke-width="1.1"/></svg>
<div class="a" style="left:576px;top:354px;width:60px;height:22px;background:linear-gradient(#F0F0F0,#E5E5E5);border:1px solid #ACACAC;"></div>
<div class="t" style="left:582px;top:358.84px;font-size:12px;line-height:14px;font-weight:400;color:#000;">FALSE</div>
<svg class="a" style="left:622.5px;top:360.5px" width="8" height="6"><path d="M1 1 L4.0 5 L7 1" fill="none" stroke="#5a5a5a" stroke-width="1.1"/></svg>
<div class="a" style="left:258px;top:387px;width:1123px;height:33px;background:#FFFFE0;border:1px solid #111;"></div>
<div class="a" style="left:261px;top:390px;width:273px;height:27px;border:1px solid #222;"></div>
<svg class="a" style="left:264px;top:393px" width="20" height="20"><defs><linearGradient id="sg" x1="0" y1="0" x2="1" y2="1"><stop offset="0" stop-color="#8a8a8a"/><stop offset="0.5" stop-color="#6e6e6e"/><stop offset="1" stop-color="#4a4a4a"/></linearGradient></defs><rect width="20" height="20" fill="url(#sg)"/><path d="M0 6 L14 20 M3 0 L20 17 M8 0 L20 12" stroke="#a8a8a8" stroke-width="1.5" opacity="0.8"/><path d="M12 0 H20 V8 Z" fill="#080808"/><circle cx="5" cy="6" r="1" fill="#58c048"/><circle cx="9" cy="12" r="1" fill="#58c048"/><circle cx="15" cy="14" r="1" fill="#58c048"/><circle cx="4" cy="15" r="0.8" fill="#58c048"/></svg>
<div class="t" style="left:288px;top:394.96px;font-size:16px;line-height:19px;font-weight:400;color:#000;">57994 Пронизывающий ветер</div>
<div class="a" style="left:513px;top:393px;width:19px;height:21px;background:#DDDDDD;border:1px solid #707070;"></div>
<div class="t" style="left:513px;top:393px;width:19px;height:21px;line-height:21px;text-align:center;font-size:10px">...</div>
<div class="a" style="left:539px;top:390px;width:100px;height:27px;background:linear-gradient(#F0F0F0,#E5E5E5);border:1px solid #ACACAC;"></div>
<div class="t" style="left:545px;top:396.84px;font-size:12px;line-height:14px;font-weight:400;color:#000;">ForeachUnit</div>
<svg class="a" style="left:625.5px;top:398.5px" width="8" height="6"><path d="M1 1 L4.0 5 L7 1" fill="none" stroke="#5a5a5a" stroke-width="1.1"/></svg>
<div class="a" style="left:643px;top:390px;width:120px;height:27px;background:linear-gradient(#F0F0F0,#E5E5E5);border:1px solid #ACACAC;"></div>
<div class="t" style="left:649px;top:396.84px;font-size:12px;line-height:14px;font-weight:400;color:#000;">Атакуемая цель</div>
<svg class="a" style="left:749.5px;top:398.5px" width="8" height="6"><path d="M1 1 L4.0 5 L7 1" fill="none" stroke="#5a5a5a" stroke-width="1.1"/></svg>
<div class="a" style="left:767px;top:390px;width:145px;height:27px;background:linear-gradient(#ECF4FC,#DCECFC);border:1px solid #7EB4EA;"></div>
<div class="t" style="left:773px;top:396.84px;font-size:12px;line-height:14px;font-weight:400;color:#000;">Только мгновенные</div>
<svg class="a" style="left:898.5px;top:398.5px" width="8" height="6"><path d="M1 1 L4.0 5 L7 1" fill="none" stroke="#111" stroke-width="1.1"/></svg>
<div class="t" style="left:914px;top:396.84px;font-size:12px;line-height:14px;font-weight:400;color:#000;">Клавиша:</div>
<div class="a" style="left:970px;top:390px;width:200px;height:27px;background:#fff;border:1px solid #ABADB3;"></div>
<div class="a" style="left:241px;top:431px;width:1147px;height:300px;background:#90EE90;border:1px solid #111;"></div>
<div class="a" style="left:268px;top:443px;width:2px;height:257px;background:#487748;"></div>
<div class="a" style="left:268px;top:443px;width:28px;height:2px;background:#263a26;"></div>
<div class="a" style="left:322px;top:443px;width:2px;height:34px;background:#487748;"></div>
<div class="a" style="left:322px;top:443px;width:28px;height:2px;background:#263a26;"></div>
<div class="a" style="left:322px;top:502px;width:2px;height:30px;background:#487748;"></div>
<div class="a" style="left:299px;top:479px;width:49px;height:22px;background:linear-gradient(#F0F0F0,#E5E5E5);border:1px solid #ACACAC;"></div>
<div class="t" style="left:305px;top:483.84px;font-size:12px;line-height:14px;font-weight:400;color:#000;">and</div>
<svg class="a" style="left:334.5px;top:485.5px" width="8" height="6"><path d="M1 1 L4.0 5 L7 1" fill="none" stroke="#5a5a5a" stroke-width="1.1"/></svg>
<div class="a" style="left:317px;top:531px;width:12px;height:12px;background:#DDDDDD;border:1px solid #707070;"></div>
<div class="a" style="left:331px;top:531px;width:12px;height:12px;background:#DDDDDD;border:1px solid #707070;"></div>
<div class="t" style="left:317px;top:531px;width:12px;height:12px;line-height:11px;text-align:center;font-size:8px;color:#6a6a9a">(</div>
<div class="t" style="left:331px;top:531px;width:12px;height:12px;line-height:12px;text-align:center;font-size:9px;color:#3a3a6a">+</div>
<div class="a" style="left:329px;top:536px;width:2px;height:1px;background:#2c3e2c;"></div>
<div class="a" style="left:343px;top:536px;width:7px;height:2px;background:#263a26;"></div>
<div class="a" style="left:355px;top:467px;width:22px;height:22px;background:#DDDDDD;border:1px solid #707070;"></div>
<div class="t" style="left:355px;top:467px;width:22px;height:22px;line-height:22px;text-align:center;font-size:12px">{</div>
<div class="a" style="left:381px;top:467px;width:22px;height:22px;background:#DDDDDD;border:1px solid #707070;"></div>
<div class="t" style="left:381px;top:467px;width:22px;height:22px;line-height:22px;text-align:center;font-size:12px">-</div>
<div class="a" style="left:407px;top:437px;width:113px;height:82px;background:linear-gradient(#F0F0F0,#E5E5E5);border:1px solid #ACACAC;"></div>
<div class="t" style="left:413px;top:441.84px;font-size:12px;line-height:14px;font-weight:400;color:#000;">Произношение</div>
<svg class="a" style="left:507.5px;top:474.5px" width="7" height="5"><path d="M1 1 L3.5 4 L6 1" fill="none" stroke="#5a5a5a" stroke-width="1.1"/></svg>
<div class="a" style="left:524px;top:437px;width:145px;height:82px;background:linear-gradient(#F0F0F0,#E5E5E5);border:1px solid #ACACAC;"></div>
<div class="t" style="left:530px;top:441.84px;font-size:12px;line-height:14px;font-weight:400;color:#000;">Канальное</div>
<svg class="a" style="left:656.5px;top:474.5px" width="7" height="5"><path d="M1 1 L3.5 4 L6 1" fill="none" stroke="#5a5a5a" stroke-width="1.1"/></svg>
<div class="a" style="left:673px;top:437px;width:92px;height:82px;background:linear-gradient(#F0F0F0,#E5E5E5);border:1px solid #ACACAC;"></div>
<div class="t" style="left:679px;top:441.84px;font-size:12px;line-height:14px;font-weight:400;color:#000;">ForeachUnit</div>
<svg class="a" style="left:752.5px;top:474.5px" width="7" height="5"><path d="M1 1 L3.5 4 L6 1" fill="none" stroke="#5a5a5a" stroke-width="1.1"/></svg>
<div class="a" style="left:770px;top:471px;width:13px;height:13px;background:#fff;border:1px solid #333;"></div>
<svg class="a" style="left:770px;top:471px" width="13" height="13"><path d="M2.5 6.5 L5.2 9.5 L10.5 2.8" fill="none" stroke="#111" stroke-width="1.6"/></svg>
<div class="t" style="left:789px;top:471.84px;font-size:12px;line-height:14px;font-weight:400;color:#000;">Прерываемый каст</div>
<div class="a" style="left:899px;top:437px;width:132px;height:82px;background:#fff;border:1px solid #ABADB3;"></div>
<div class="t" style="left:902px;top:440.84px;font-size:12px;line-height:14px;font-weight:400;color:#000;">Божественный гимн</div>
<div class="t" style="left:902px;top:456.84px;font-size:12px;line-height:14px;font-weight:400;color:#000;">Спокойствие</div>
<div class="t" style="left:902px;top:472.84px;font-size:12px;line-height:14px;font-weight:400;color:#000;">Молния-лассо</div>
<div class="t" style="left:902px;top:488.84px;font-size:12px;line-height:14px;font-weight:400;color:#000;">Контроль над разумом</div>
<div class="t" style="left:902px;top:504.84px;font-size:12px;line-height:14px;font-weight:400;color:#000;">Похищение жизни</div>
<div class="a" style="left:1035px;top:437px;width:50px;height:82px;background:linear-gradient(#F0F0F0,#E5E5E5);border:1px solid #ACACAC;"></div>
<div class="t" style="left:1041px;top:441.84px;font-size:12px;line-height:14px;font-weight:400;color:#000;">&gt;</div>
<svg class="a" style="left:1072.5px;top:474.5px" width="7" height="5"><path d="M1 1 L3.5 4 L6 1" fill="none" stroke="#5a5a5a" stroke-width="1.1"/></svg>
<div class="a" style="left:1089px;top:437px;width:84px;height:82px;background:linear-gradient(#F0F0F0,#E5E5E5);border:1px solid #ACACAC;"></div>
<div class="t" style="left:1095px;top:441.84px;font-size:12px;line-height:14px;font-weight:400;color:#000;">Константа</div>
<svg class="a" style="left:1160.5px;top:474.5px" width="7" height="5"><path d="M1 1 L3.5 4 L6 1" fill="none" stroke="#5a5a5a" stroke-width="1.1"/></svg>
<div class="a" style="left:1177px;top:437px;width:60px;height:82px;background:#fff;border:1px solid #ABADB3;"></div>
<div class="t" style="left:1180px;top:439.84px;font-size:12px;line-height:14px;font-weight:400;color:#000;">0.3</div>
<div class="a" style="left:355px;top:529px;width:22px;height:22px;background:#DDDDDD;border:1px solid #707070;"></div>
<div class="t" style="left:355px;top:529px;width:22px;height:22px;line-height:22px;text-align:center;font-size:12px">{</div>
<div class="a" style="left:381px;top:529px;width:22px;height:22px;background:#DDDDDD;border:1px solid #707070;"></div>
<div class="t" style="left:381px;top:529px;width:22px;height:22px;line-height:22px;text-align:center;font-size:12px">-</div>
<div class="a" style="left:407px;top:529px;width:60px;height:22px;background:linear-gradient(#F0F0F0,#E5E5E5);border:1px solid #ACACAC;"></div>
<div class="t" style="left:413px;top:533.84px;font-size:12px;line-height:14px;font-weight:400;color:#000;">Баф</div>
<svg class="a" style="left:453.5px;top:535.5px" width="8" height="6"><path d="M1 1 L4.0 5 L7 1" fill="none" stroke="#5a5a5a" stroke-width="1.1"/></svg>
<div class="a" style="left:472px;top:529px;width:91px;height:22px;background:linear-gradient(#F0F0F0,#E5E5E5);border:1px solid #ACACAC;"></div>
<div class="t" style="left:478px;top:533.84px;font-size:12px;line-height:14px;font-weight:400;color:#000;">ForeachUnit</div>
<svg class="a" style="left:549.5px;top:535.5px" width="8" height="6"><path d="M1 1 L4.0 5 L7 1" fill="none" stroke="#5a5a5a" stroke-width="1.1"/></svg>
<div class="a" style="left:567px;top:529px;width:145px;height:22px;background:linear-gradient(#F0F0F0,#E5E5E5);border:1px solid #ACACAC;"></div>
<div class="t" style="left:573px;top:533.84px;font-size:12px;line-height:14px;font-weight:400;color:#000;">Осталось времени</div>
<svg class="a" style="left:698.5px;top:535.5px" width="8" height="6"><path d="M1 1 L4.0 5 L7 1" fill="none" stroke="#5a5a5a" stroke-width="1.1"/></svg>
<div class="a" style="left:716px;top:529px;width:145px;height:22px;background:linear-gradient(#F0F0F0,#E5E5E5);border:1px solid #ACACAC;"></div>
<div class="t" style="left:722px;top:533.84px;font-size:12px;line-height:14px;font-weight:400;color:#000;">любой источник</div>
<svg class="a" style="left:847.5px;top:535.5px" width="8" height="6"><path d="M1 1 L4.0 5 L7 1" fill="none" stroke="#5a5a5a" stroke-width="1.1"/></svg>
<div class="a" style="left:865px;top:529px;width:100px;height:22px;background:#fff;border:1px solid #ABADB3;"></div>
<div class="t" style="left:868px;top:531.84px;font-size:12px;line-height:14px;font-weight:400;color:#000;">Оберег Пустоты</div>
<div class="a" style="left:969px;top:529px;width:50px;height:22px;background:linear-gradient(#F0F0F0,#E5E5E5);border:1px solid #ACACAC;"></div>
<div class="t" style="left:975px;top:533.84px;font-size:12px;line-height:14px;font-weight:400;color:#000;">==</div>
<svg class="a" style="left:1005.5px;top:535.5px" width="8" height="6"><path d="M1 1 L4.0 5 L7 1" fill="none" stroke="#5a5a5a" stroke-width="1.1"/></svg>
<div class="a" style="left:1023px;top:529px;width:83px;height:22px;background:linear-gradient(#F0F0F0,#E5E5E5);border:1px solid #ACACAC;"></div>
<div class="t" style="left:1029px;top:533.84px;font-size:12px;line-height:14px;font-weight:400;color:#000;">Константа</div>
<svg class="a" style="left:1092.5px;top:535.5px" width="8" height="6"><path d="M1 1 L4.0 5 L7 1" fill="none" stroke="#5a5a5a" stroke-width="1.1"/></svg>
<div class="a" style="left:1110px;top:529px;width:60px;height:22px;background:#fff;border:1px solid #ABADB3;"></div>
<div class="t" style="left:1113px;top:531.84px;font-size:12px;line-height:14px;font-weight:400;color:#000;">0</div>
<div class="a" style="left:322px;top:567px;width:2px;height:133px;background:#487748;"></div>
<div class="a" style="left:322px;top:567px;width:28px;height:2px;background:#263a26;"></div>
<div class="a" style="left:355px;top:607px;width:22px;height:22px;background:#DDDDDD;border:1px solid #707070;"></div>
<div class="t" style="left:355px;top:607px;width:22px;height:22px;line-height:22px;text-align:center;font-size:12px">{</div>
<div class="a" style="left:381px;top:607px;width:22px;height:22px;background:#DDDDDD;border:1px solid #707070;"></div>
<div class="t" style="left:381px;top:607px;width:22px;height:22px;line-height:22px;text-align:center;font-size:12px">-</div>
<div class="a" style="left:407px;top:561px;width:113px;height:113px;background:linear-gradient(#F0F0F0,#E5E5E5);border:1px solid #ACACAC;"></div>
<div class="t" style="left:413px;top:565.84px;font-size:12px;line-height:14px;font-weight:400;color:#000;">Произношение</div>
<svg class="a" style="left:507.5px;top:614.0px" width="7" height="5"><path d="M1 1 L3.5 4 L6 1" fill="none" stroke="#5a5a5a" stroke-width="1.1"/></svg>
<div class="a" style="left:524px;top:561px;width:145px;height:113px;background:linear-gradient(#F0F0F0,#E5E5E5);border:1px solid #ACACAC;"></div>
<div class="t" style="left:530px;top:565.84px;font-size:12px;line-height:14px;font-weight:400;color:#000;">Обычное</div>
<svg class="a" style="left:656.5px;top:614.0px" width="7" height="5"><path d="M1 1 L3.5 4 L6 1" fill="none" stroke="#5a5a5a" stroke-width="1.1"/></svg>
<div class="a" style="left:673px;top:561px;width:92px;height:113px;background:linear-gradient(#F0F0F0,#E5E5E5);border:1px solid #ACACAC;"></div>
<div class="t" style="left:679px;top:565.84px;font-size:12px;line-height:14px;font-weight:400;color:#000;">ForeachUnit</div>
<svg class="a" style="left:752.5px;top:614.0px" width="7" height="5"><path d="M1 1 L3.5 4 L6 1" fill="none" stroke="#5a5a5a" stroke-width="1.1"/></svg>
<div class="a" style="left:770px;top:612px;width:13px;height:13px;background:#fff;border:1px solid #333;"></div>
<svg class="a" style="left:770px;top:612px" width="13" height="13"><path d="M2.5 6.5 L5.2 9.5 L10.5 2.8" fill="none" stroke="#111" stroke-width="1.6"/></svg>
<div class="t" style="left:789px;top:612.84px;font-size:12px;line-height:14px;font-weight:400;color:#000;">Прерываемый каст</div>
<div class="a" style="left:899px;top:561px;width:198px;height:113px;background:#fff;border:1px solid #ABADB3;"></div>
<div class="t" style="left:902px;top:563.84px;font-size:12px;line-height:14px;font-weight:400;color:#000;">Сосредоточенный азеритовый луч</div>
<div class="t" style="left:902px;top:579.84px;font-size:12px;line-height:14px;font-weight:400;color:#000;">Циклотронный удар</div>
<div class="t" style="left:902px;top:595.84px;font-size:12px;line-height:14px;font-weight:400;color:#000;">Неистовство Тьмы</div>
<div class="t" style="left:902px;top:611.84px;font-size:12px;line-height:14px;font-weight:400;color:#000;">Контроль над разумом</div>
<div class="a" style="left:1101px;top:561px;width:58px;height:113px;background:linear-gradient(#F0F0F0,#E5E5E5);border:1px solid #ACACAC;"></div>
<div class="t" style="left:1107px;top:565.84px;font-size:12px;line-height:14px;font-weight:400;color:#000;">range</div>
<svg class="a" style="left:1146.5px;top:614.0px" width="7" height="5"><path d="M1 1 L3.5 4 L6 1" fill="none" stroke="#5a5a5a" stroke-width="1.1"/></svg>
<div class="a" style="left:1163px;top:561px;width:32px;height:113px;background:linear-gradient(#F0F0F0,#E5E5E5);border:1px solid #ACACAC;"></div>
<div class="t" style="left:1169px;top:565.84px;font-size:12px;line-height:14px;font-weight:400;color:#000;">(</div>
<svg class="a" style="left:1182.5px;top:614.0px" width="7" height="5"><path d="M1 1 L3.5 4 L6 1" fill="none" stroke="#5a5a5a" stroke-width="1.1"/></svg>
<div class="a" style="left:1199px;top:561px;width:60px;height:113px;background:#fff;border:1px solid #ABADB3;"></div>
<div class="t" style="left:1202px;top:563.84px;font-size:12px;line-height:14px;font-weight:400;color:#000;">0</div>
<div class="t" style="left:1262px;top:563.84px;font-size:12px;line-height:14px;font-weight:400;color:#2a6a2a;">;</div>
<div class="a" style="left:1270px;top:561px;width:60px;height:113px;background:#fff;border:1px solid #ABADB3;"></div>
<div class="t" style="left:1273px;top:563.84px;font-size:12px;line-height:14px;font-weight:400;color:#000;">0.7</div>
<div class="a" style="left:1334px;top:561px;width:31px;height:113px;background:linear-gradient(#F0F0F0,#E5E5E5);border:1px solid #ACACAC;"></div>
<div class="t" style="left:1340px;top:565.84px;font-size:12px;line-height:14px;font-weight:400;color:#000;">]</div>
<svg class="a" style="left:1352.5px;top:614.0px" width="7" height="5"><path d="M1 1 L3.5 4 L6 1" fill="none" stroke="#5a5a5a" stroke-width="1.1"/></svg>
</div>
<div class="a" style="left:1408px;top:78px;width:15px;height:538px;background:#F0F0F0;"></div>
<div class="a" style="left:1408px;top:191px;width:15px;height:34px;background:#CDCDCD;"></div>
<svg class="a" style="left:1410.5px;top:84.0px" width="10" height="6"><path d="M1 5 L5.0 1 L9 5" fill="none" stroke="#999" stroke-width="1.1"/></svg>
<svg class="a" style="left:1410.5px;top:604.0px" width="10" height="6"><path d="M1 1 L5.0 5 L9 1" fill="none" stroke="#999" stroke-width="1.1"/></svg>
<div class="a" style="left:201px;top:616px;width:1222px;height:2px;background:#111;"></div>
<div class="a" style="left:199px;top:618px;width:1224px;height:134px;background:#fff;"></div>
<div class="t" style="left:203px;top:621.84px;font-size:12px;line-height:14px;font-weight:400;color:#000;">Пользовательский код</div>
<div class="a" style="left:201px;top:638px;width:1222px;height:114px;background:#fff;border:1px solid #ABADB3;border-right:none;border-bottom:none;"></div>
<div class="a" style="left:202px;top:639px;width:1205px;height:113px;overflow:hidden">
</div>
<div class="a" style="left:0;top:0;width:1423px;height:752px;clip-path:inset(639px 16px 0 202px)">
<div class="t" style="left:231px;top:625.84px;font-size:12px;line-height:14px;font-weight:400;color:#000;">local function _castInfo(unit) return UnitCastingInfo(unit) end</div>
<div class="t" style="left:217px;top:641.84px;font-size:12px;line-height:14px;font-weight:400;color:#000;">local spell1, endTime1, notInterruptible1, spell2, startTime2, endTime2, notInterruptible2;</div>
<div class="t" style="left:217px;top:673.84px;font-size:12px;line-height:14px;font-weight:400;color:#000;">if version9 then</div>
<div class="t" style="left:231px;top:689.84px;font-size:12px;line-height:14px;font-weight:400;color:#000;">spell1, <span style="display:inline-block;width:6px;height:1px;background:#111;vertical-align:-1px;margin-right:-1.5px"></span>, <span style="display:inline-block;width:6px;height:1px;background:#111;vertical-align:-1px;margin-right:-1.5px"></span>, <span style="display:inline-block;width:6px;height:1px;background:#111;vertical-align:-1px;margin-right:-1.5px"></span>, endTime1, <span style="display:inline-block;width:6px;height:1px;background:#111;vertical-align:-1px;margin-right:-1.5px"></span>, <span style="display:inline-block;width:6px;height:1px;background:#111;vertical-align:-1px;margin-right:-1.5px"></span>, notInterruptible1, <span style="display:inline-block;width:6px;height:1px;background:#111;vertical-align:-1px;margin-right:-1.5px"></span> = UnitCastingInfo(unit)</div>
<div class="t" style="left:231px;top:705.84px;font-size:12px;line-height:14px;font-weight:400;color:#000;">spell2, <span style="display:inline-block;width:6px;height:1px;background:#111;vertical-align:-1px;margin-right:-1.5px"></span>, <span style="display:inline-block;width:6px;height:1px;background:#111;vertical-align:-1px;margin-right:-1.5px"></span>, startTime2, endTime2, <span style="display:inline-block;width:6px;height:1px;background:#111;vertical-align:-1px;margin-right:-1.5px"></span>, notInterruptible2, <span style="display:inline-block;width:6px;height:1px;background:#111;vertical-align:-1px;margin-right:-1.5px"></span> = UnitChannelInfo(unit)</div>
<div class="t" style="left:217px;top:721.84px;font-size:12px;line-height:14px;font-weight:400;color:#000;">else</div>
<div class="t" style="left:231px;top:737.84px;font-size:12px;line-height:14px;font-weight:400;color:#000;">spell1, <span style="display:inline-block;width:6px;height:1px;background:#111;vertical-align:-1px;margin-right:-1.5px"></span>, <span style="display:inline-block;width:6px;height:1px;background:#111;vertical-align:-1px;margin-right:-1.5px"></span>, <span style="display:inline-block;width:6px;height:1px;background:#111;vertical-align:-1px;margin-right:-1.5px"></span>, <span style="display:inline-block;width:6px;height:1px;background:#111;vertical-align:-1px;margin-right:-1.5px"></span>, endTime1, <span style="display:inline-block;width:6px;height:1px;background:#111;vertical-align:-1px;margin-right:-1.5px"></span>, <span style="display:inline-block;width:6px;height:1px;background:#111;vertical-align:-1px;margin-right:-1.5px"></span>, notInterruptible1, <span style="display:inline-block;width:6px;height:1px;background:#111;vertical-align:-1px;margin-right:-1.5px"></span> = UnitCastingInfo(unit)</div>
</div>
<div class="a" style="left:1407px;top:639px;width:16px;height:112px;background:#F0F0F0;"></div>
<div class="a" style="left:199px;top:751px;width:1224px;height:1px;background:#A0A2A8;"></div>
<div class="a" style="left:1407px;top:677px;width:16px;height:8px;background:#CDCDCD;"></div>
<svg class="a" style="left:1410.0px;top:645.0px" width="10" height="6"><path d="M1 5 L5.0 1 L9 5" fill="none" stroke="#999" stroke-width="1.1"/></svg>
<svg class="a" style="left:1410.0px;top:740.0px" width="10" height="6"><path d="M1 1 L5.0 5 L9 1" fill="none" stroke="#999" stroke-width="1.1"/></svg>
</body></html>
